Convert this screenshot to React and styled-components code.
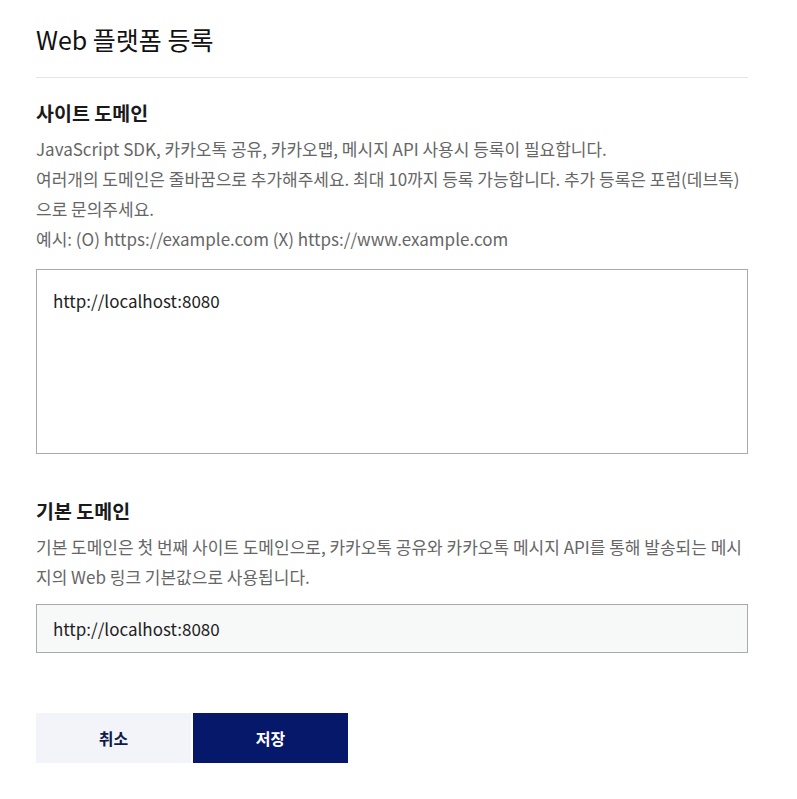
import React from "react";
import styled, { createGlobalStyle } from "styled-components";

const Global = createGlobalStyle`
  * { box-sizing: border-box; }
  body {
    margin: 0;
    background: #fff;
    font-family: "Noto Sans CJK KR", "Noto Sans", sans-serif;
    color: #111;
  }
`;

const Page = styled.div`
  width: 712px;
  margin-left: 36px;
  padding-top: 21px;
  padding-bottom: 36px;
`;

const Title = styled.h1`
  margin: 0;
  font-size: 25px;
  line-height: 36px;
  font-weight: 400;
  color: #111;
  padding-bottom: 20px;
  border-bottom: 1px solid #e5e5e5;
`;

const Section = styled.section`
  margin-top: ${(p) => p.$top}px;
`;

const SectionTitle = styled.h2`
  margin: 0;
  font-size: 19.5px;
  line-height: 27px;
  font-weight: 700;
  color: #1a1a1a;
`;

const Desc = styled.p`
  margin: 8px 0 0;
  font-size: 17px;
  line-height: 30px;
  color: #666;
  word-break: normal;
`;

const TextArea = styled.textarea`
  display: block;
  width: 100%;
  height: 185px;
  margin-top: 15px;
  padding: 18px 16px;
  border: 1px solid #aaa;
  border-radius: 0;
  resize: none;
  outline: none;
  font-family: inherit;
  font-size: 17px;
  line-height: 26px;
  color: #222;
  background: #fff;
`;

const Input = styled.input`
  display: block;
  width: 100%;
  height: 49px;
  margin-top: 12px;
  padding: 0 16px;
  border: 1px solid #aaa;
  border-radius: 0;
  outline: none;
  font-family: inherit;
  font-size: 17px;
  color: #222;
  background: #f7f8f8;
`;

const Buttons = styled.div`
  display: flex;
  gap: 2px;
  margin-top: 60px;
`;

const Button = styled.button`
  width: 155px;
  height: 50px;
  border: 0;
  border-radius: 0;
  font-family: inherit;
  font-size: 16px;
  font-weight: 700;
  cursor: pointer;
  background: ${(p) => (p.$primary ? "#06186a" : "#f2f4f9")};
  color: ${(p) => (p.$primary ? "#fff" : "#0f1a4a")};
`;

export default function App() {
  return (
    <>
      <Global />
      <Page>
        <Title>Web 플랫폼 등록</Title>
        <Section $top={21}>
          <SectionTitle>사이트 도메인</SectionTitle>
          <Desc>
            JavaScript SDK, 카카오톡 공유, 카카오맵, 메시지 API 사용시 등록이 필요합니다.
            <br />
            여러개의 도메인은 줄바꿈으로 추가해주세요. 최대 10까지 등록 가능합니다. 추가 등록은 포럼(데브톡)으로 문의주세요.
            <br />
            예시: (O) https://example.com (X) https://www.example.com
          </Desc>
          <TextArea defaultValue="http://localhost:8080" spellCheck={false} />
        </Section>
        <Section $top={43}>
          <SectionTitle>기본 도메인</SectionTitle>
          <Desc>
            기본 도메인은 첫 번째 사이트 도메인으로, 카카오톡 공유와 카카오톡 메시지 API를 통해 발송되는 메시지의 Web 링크 기본값으로 사용됩니다.
          </Desc>
          <Input readOnly defaultValue="http://localhost:8080" />
        </Section>
        <Buttons>
          <Button>취소</Button>
          <Button $primary>저장</Button>
        </Buttons>
      </Page>
    </>
  );
}
